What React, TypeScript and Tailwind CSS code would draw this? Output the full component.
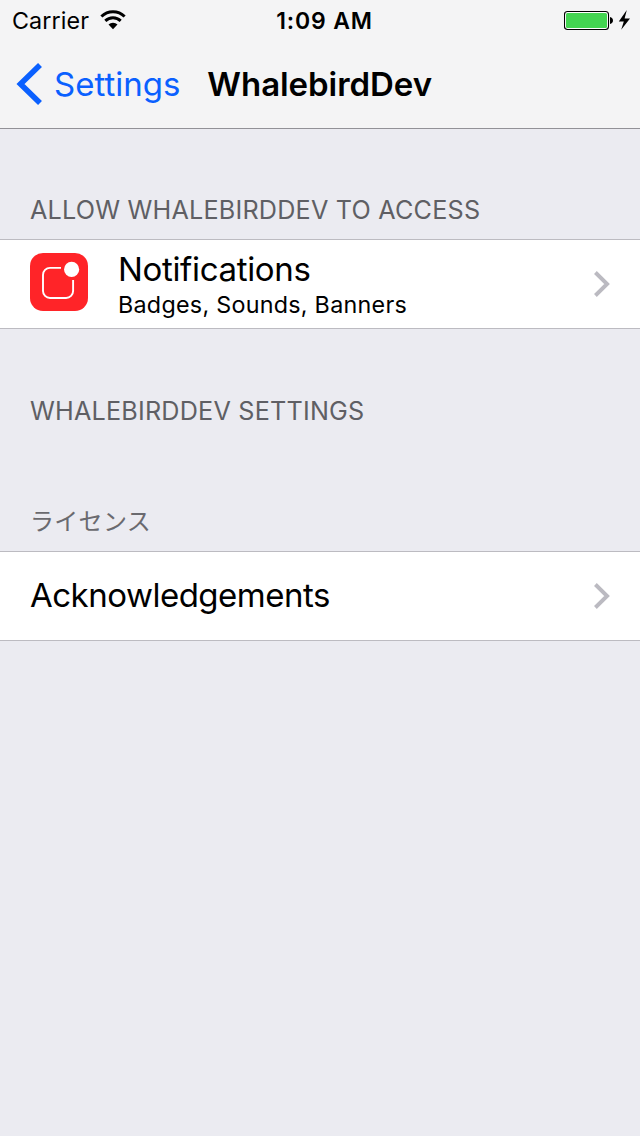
import type { ReactNode } from 'react';

function WifiIcon() {
  return (
    <svg width="26" height="20" viewBox="0 0 26 20" fill="none" className="shrink-0">
      <path d="M1.4 6.5a16.5 16.5 0 0 1 23.2 0" stroke="#000" strokeWidth="3" />
      <path d="M5.3 10.9a10.9 10.9 0 0 1 15.4 0" stroke="#000" strokeWidth="2.9" />
      <path d="M13 19.2l-4.5-4.7a6.4 6.4 0 0 1 9 0z" fill="#000" />
    </svg>
  );
}

function BatteryIcon() {
  return (
    <svg width="68" height="24" viewBox="0 0 68 24" className="shrink-0">
      <rect x="0.5" y="3.5" width="44" height="18" rx="3" fill="#fff" stroke="#000" strokeWidth="1.1" />
      <rect x="2" y="5" width="41" height="15" rx="1.5" fill="#43d551" />
      <path d="M46 9c1.8.2 3 1.7 3 3.5s-1.2 3.3-3 3.500z" fill="#000" />
      <path d="M62.8 2L54.8 13.4h5L57.2 21.8 66 10.4h-5.4z" fill="#000" />
    </svg>
  );
}

function BackChevron() {
  return (
    <svg width="27" height="42" viewBox="0 0 27 42" fill="none" className="shrink-0">
      <path d="M24 2L4.5 21 24 40" stroke="#0a60ff" strokeWidth="5.6" />
    </svg>
  );
}

function DisclosureChevron() {
  return (
    <svg width="18" height="28" viewBox="0 0 18 28" fill="none" className="shrink-0">
      <path d="M2.400 2.500L14.100 14 2.400 25.500" stroke="#bbbac1" strokeWidth="3.9" />
    </svg>
  );
}

function NotificationsIcon() {
  return (
    <svg width="58" height="58" viewBox="0 0 58 58" fill="none" className="shrink-0">
      <rect width="58" height="58" rx="13" fill="#ff2428" />
      <path
        d="M31 14.900H20a7 7 0 0 0-7 7V38a7 7 0 0 0 7 7h16.100a7 7 0 0 0 7-7V27"
        stroke="#fff"
        strokeWidth="1.9"
      />
      <circle cx="41.6" cy="16.4" r="7.6" fill="#fff" />
    </svg>
  );
}

function Row({ children }: { children: ReactNode }) {
  return (
    <button type="button" className="flex h-[90px] w-full items-center border-y border-[#bcbbc1] bg-white pr-[29px] pl-[30px] text-left">
      {children}
      <span className="ml-auto">
        <DisclosureChevron />
      </span>
    </button>
  );
}

const sectionLabel = 'pl-[30px] text-[25.2px] leading-8 tracking-[0.2px] text-[#5f5f64] whitespace-nowrap';

export default function App() {
  return (
    <div className="min-h-[1136px] w-[640px] bg-[#ebebf1] font-['Inter','Noto_Sans_CJK_JP',sans-serif] text-black">
      <header className="h-[129px] border-b border-[#929197] bg-[#f4f4f5]">
        <div className="grid h-10 grid-cols-[1fr_auto_1fr] items-center pr-2 pl-3">
          <div className="flex items-center gap-[11px]">
            <span className="pt-0.5 text-[23.3px] leading-[38px] tracking-[0.09px]">Carrier</span>
            <WifiIcon />
          </div>
          <span className="pt-0.5 pl-[5px] text-[23px] leading-[38px] font-semibold tracking-[0.85px]">1:09 AM</span>
          <div className="flex justify-end">
            <BatteryIcon />
          </div>
        </div>
        <nav className="flex h-[88px] items-center pl-4 whitespace-nowrap">
          <button type="button" className="flex items-center gap-[11px] text-[#0a60ff]">
            <BackChevron />
            <span className="text-[33px] leading-10 tracking-[0px]">Settings</span>
          </button>
          <h1 className="ml-[27px] text-[33px] leading-10 font-semibold tracking-[-0.05px]">WhalebirdDev</h1>
        </nav>
      </header>

      <section>
        <h2 className={`${sectionLabel} pt-[65px] pb-[13px]`}>ALLOW WHALEBIRDDEV TO ACCESS</h2>
        <Row>
          <span className="pb-1">
            <NotificationsIcon />
          </span>
          <span className="ml-[30px] flex flex-col pt-[3px] whitespace-nowrap">
            <span className="text-[33px] leading-[39px] tracking-[-0.33px]">Notifications</span>
            <span className="text-[23.3px] leading-[32px] tracking-[0.27px]">Badges, Sounds, Banners</span>
          </span>
        </Row>
      </section>

      <section>
        <h2 className={`${sectionLabel} pt-[66px]`}>WHALEBIRDDEV SETTINGS</h2>
      </section>

      <section>
        <h2 className="pt-[77px] pb-[15px] pl-[30px] font-['Noto_Sans_CJK_JP',sans-serif] text-[24px] leading-8 tracking-[0.3px] text-[#6a6a6f]">
          ライセンス
        </h2>
        <Row>
          <span className="pb-0.5 text-[33px] leading-10 tracking-[-0.5px]">Acknowledgements</span>
        </Row>
      </section>
    </div>
  );
}
